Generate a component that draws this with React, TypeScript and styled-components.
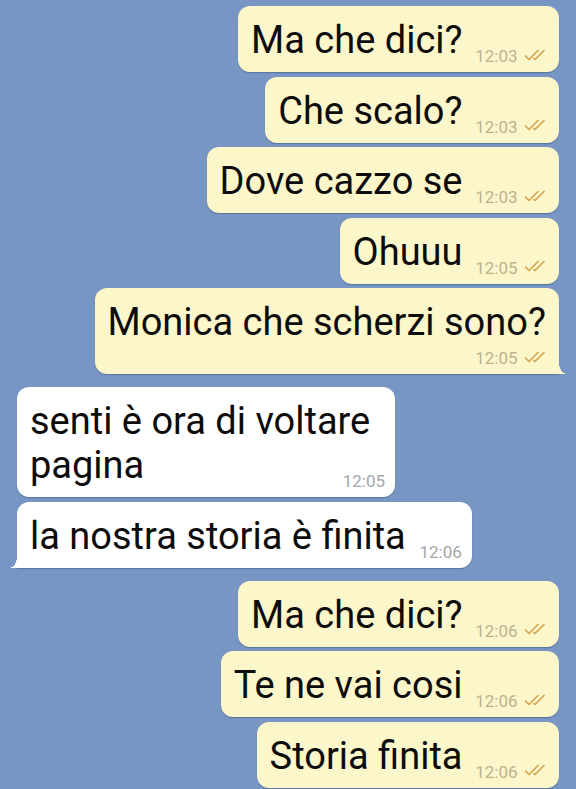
import React from "react";
import styled, { createGlobalStyle, css } from "styled-components";

type Side = "out" | "in";

interface Message {
  text: string;
  time: string;
  maxWidth?: number; // wrapped bubbles shrink to their widest line in the app
}

interface Group {
  side: Side;
  tail: boolean;
  messages: Message[];
}

const groups: Group[] = [
  {
    side: "out",
    tail: true,
    messages: [
      { text: "Ma che dici?", time: "12:03" },
      { text: "Che scalo?", time: "12:03" },
      { text: "Dove cazzo se", time: "12:03" },
      { text: "Ohuuu", time: "12:05" },
      { text: "Monica che scherzi sono?", time: "12:05" },
    ],
  },
  {
    side: "in",
    tail: true,
    messages: [
      { text: "senti è ora di voltare pagina", time: "12:05", maxWidth: 378 },
      { text: "la nostra storia è finita", time: "12:06" },
    ],
  },
  {
    side: "out",
    tail: false, // the last bubble runs past the bottom of the screen
    messages: [
      { text: "Ma che dici?", time: "12:06" },
      { text: "Te ne vai cosi", time: "12:06" },
      { text: "Storia finita", time: "12:06" },
    ],
  },
];

const colors = {
  wall: "#7796c3",
  out: "#fcf6cb",
  in: "#ffffff",
  outTime: "#bdb28e",
  inTime: "#a4a6a9",
  check: "#d5a650",
};

const Checks = () => (
  <CheckIcon viewBox="0 0 25 12" aria-hidden>
    <path d="M1.5 7 L5 10.5 L14 1.5" />
    <path d="M10 9.5 L11 10.5 L20 1.5" />
  </CheckIcon>
);

const App: React.FC = () => (
  <>
    <GlobalStyle />
    <Page>
      {groups.map((group, gi) => (
        <GroupColumn $side={group.side} key={gi}>
          {group.messages.map((msg, mi) => (
            <Bubble
              key={mi}
              $side={group.side}
              $tail={group.tail && mi === group.messages.length - 1}
              $maxWidth={msg.maxWidth ?? 464}
            >
              <Body>
                <Txt>{msg.text}</Txt>
                <wbr />
                <Spacer $side={group.side} />
              </Body>
              <Meta>
                <Time $side={group.side}>{msg.time}</Time>
                {group.side === "out" && <Checks />}
              </Meta>
            </Bubble>
          ))}
        </GroupColumn>
      ))}
    </Page>
  </>
);

const GlobalStyle = createGlobalStyle`
  html, body {
    margin: 0;
    padding: 0;
    background: ${colors.wall};
    overflow: hidden;
  }
  body {
    font-family: Roboto, "Noto Sans", "Liberation Sans", sans-serif;
    -webkit-font-smoothing: antialiased;
  }
`;

const Page = styled.div`
  display: flex;
  flex-direction: column;
  gap: 13px;
  padding: 6px 17.5px 0 17px;
  min-height: 789px;
  box-sizing: border-box;
`;

const GroupColumn = styled.div<{ $side: Side }>`
  display: flex;
  flex-direction: column;
  gap: 4.5px;
  align-items: ${(p) => (p.$side === "out" ? "flex-end" : "flex-start")};
`;

const Bubble = styled.div<{ $side: Side; $tail: boolean; $maxWidth: number }>`
  position: relative;
  box-sizing: border-box;
  max-width: ${(p) => p.$maxWidth}px;
  padding: 12px 10px 10px 13px;
  border-radius: 12px;
  background: ${(p) => (p.$side === "out" ? colors.out : colors.in)};
  box-shadow: 0 1px 1px rgba(30, 50, 90, 0.35);
  color: #0c0c0c;

  ${(p) =>
    p.$tail &&
    p.$side === "out" &&
    css`
      border-bottom-right-radius: 0;
      &::after {
        content: "";
        position: absolute;
        right: -8px;
        bottom: 0;
        width: 8px;
        height: 11px;
        background: radial-gradient(
          ellipse 8px 11px at 100% 0,
          transparent 97%,
          ${colors.out} 100%
        );
      }
    `}

  ${(p) =>
    p.$tail &&
    p.$side === "in" &&
    css`
      border-bottom-left-radius: 0;
      &::after {
        content: "";
        position: absolute;
        left: -8px;
        bottom: 0;
        width: 8px;
        height: 11px;
        background: radial-gradient(
          ellipse 8px 11px at 0 0,
          transparent 97%,
          ${colors.in} 100%
        );
      }
    `}
`;

/* line-height 0 on the block so a line holding only the spacer stays short */
const Body = styled.div`
  font-size: 38px;
  line-height: 0;
`;

const Txt = styled.span`
  line-height: 44px;
`;

const Spacer = styled.span<{ $side: Side }>`
  display: inline-block;
  width: ${(p) => (p.$side === "out" ? 86 : 56)}px;
  height: 20px;
`;

const Meta = styled.div`
  position: absolute;
  right: 10px;
  bottom: 6px;
  display: flex;
  align-items: center;
  gap: 6px;
  height: 20px;
`;

const Time = styled.span<{ $side: Side }>`
  font-size: 17px;
  line-height: 20px;
  color: ${(p) => (p.$side === "out" ? colors.outTime : colors.inTime)};
`;

const CheckIcon = styled.svg`
  width: 25px;
  height: 12px;
  margin-bottom: 3px;
  fill: none;
  stroke: ${colors.check};
  stroke-width: 1.7;
  stroke-linecap: round;
  stroke-linejoin: round;
`;

export default App;
